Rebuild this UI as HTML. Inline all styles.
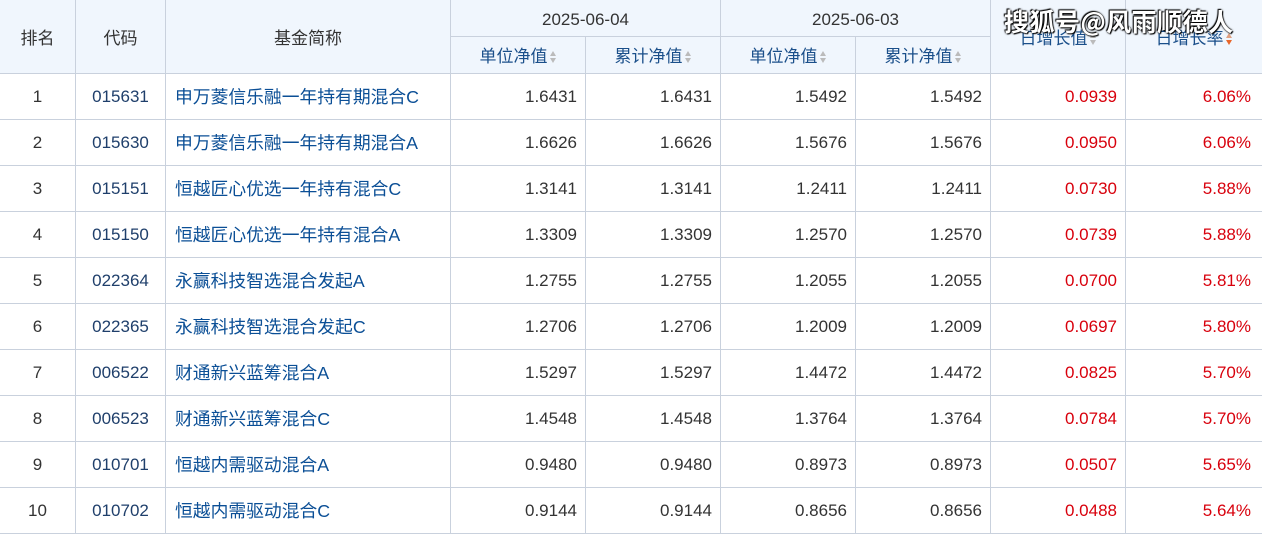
<!DOCTYPE html>
<html><head><meta charset="utf-8"><style>
body{margin:0;width:1262px;height:534px;overflow:hidden;background:#fff;font-family:"Liberation Sans","Noto Sans CJK SC",sans-serif;}
table{border-collapse:collapse;table-layout:fixed;width:1263px;position:absolute;left:-1px;top:-1px;}
td,th{border:1px solid #c9d1dd;font-size:17px;padding:0;white-space:nowrap;overflow:hidden;line-height:20px}
td>span,th>span{display:inline-block;line-height:20px;height:20px;overflow:visible;position:relative}
th>span{top:2px}
th{background:#f0f6fd;font-weight:normal;color:#333;height:36px}
th.b{color:#1a4f8a}
td{height:45px;color:#333}
td.c{text-align:center}
td.code{text-align:center;color:#1f3f6b}
td.n{text-align:left;padding-left:9px;color:#0b4f96;font-size:17.8px}
td.r{text-align:right;padding-right:8px}
td.red{text-align:right;padding-right:8px;color:#d8000c}
td.red2{text-align:right;padding-right:11px;color:#d8000c}
.s{display:inline-block;width:8px;height:14px;vertical-align:-2px;margin-left:1px}
.wm{position:absolute;left:1004px;top:6px;font-size:25px;line-height:30px;letter-spacing:0.5px;color:#fff;font-weight:bold;text-shadow:0 0 2px #000,1px 1px 1px #000,-1px -1px 1px #000;font-family:"Noto Sans CJK SC",sans-serif}
</style></head><body>
<table>
<colgroup><col style="width:76px"><col style="width:90px"><col style="width:285px"><col style="width:135px"><col style="width:135px"><col style="width:135px"><col style="width:135px"><col style="width:135px"><col style="width:137px"></colgroup>
<tr><th rowspan="2"><span>排名</span></th><th rowspan="2"><span>代码</span></th><th rowspan="2"><span>基金简称</span></th><th colspan="2"><span>2025-06-04</span></th><th colspan="2"><span>2025-06-03</span></th><th rowspan="2" class="b"><span>日增长值<svg class="s" viewBox="0 0 8 14"><path d="M4 1L7 6H1Z M4 13L7 8H1Z" fill="#bbb"/></svg></span></th><th rowspan="2" class="b"><span>日增长率<svg class="s" viewBox="0 0 8 14"><path d="M4 1L7 6H1Z" fill="#e0a080"/><path d="M4 13L7 8H1Z" fill="#e8662a"/></svg></span></th></tr>
<tr>
<th class="b"><span>单位净值<svg class="s" viewBox="0 0 8 14"><path d="M4 1L7 6H1Z M4 13L7 8H1Z" fill="#bbb"/></svg></span></th>
<th class="b"><span>累计净值<svg class="s" viewBox="0 0 8 14"><path d="M4 1L7 6H1Z M4 13L7 8H1Z" fill="#bbb"/></svg></span></th>
<th class="b"><span>单位净值<svg class="s" viewBox="0 0 8 14"><path d="M4 1L7 6H1Z M4 13L7 8H1Z" fill="#bbb"/></svg></span></th>
<th class="b"><span>累计净值<svg class="s" viewBox="0 0 8 14"><path d="M4 1L7 6H1Z M4 13L7 8H1Z" fill="#bbb"/></svg></span></th>
</tr>
<tr><td class="c"><span>1</span></td><td class="code"><span>015631</span></td><td class="n"><span>申万菱信乐融一年持有期混合C</span></td><td class="r"><span>1.6431</span></td><td class="r"><span>1.6431</span></td><td class="r"><span>1.5492</span></td><td class="r"><span>1.5492</span></td><td class="red"><span>0.0939</span></td><td class="red2"><span>6.06%</span></td></tr>
<tr><td class="c"><span>2</span></td><td class="code"><span>015630</span></td><td class="n"><span>申万菱信乐融一年持有期混合A</span></td><td class="r"><span>1.6626</span></td><td class="r"><span>1.6626</span></td><td class="r"><span>1.5676</span></td><td class="r"><span>1.5676</span></td><td class="red"><span>0.0950</span></td><td class="red2"><span>6.06%</span></td></tr>
<tr><td class="c"><span>3</span></td><td class="code"><span>015151</span></td><td class="n"><span>恒越匠心优选一年持有混合C</span></td><td class="r"><span>1.3141</span></td><td class="r"><span>1.3141</span></td><td class="r"><span>1.2411</span></td><td class="r"><span>1.2411</span></td><td class="red"><span>0.0730</span></td><td class="red2"><span>5.88%</span></td></tr>
<tr><td class="c"><span>4</span></td><td class="code"><span>015150</span></td><td class="n"><span>恒越匠心优选一年持有混合A</span></td><td class="r"><span>1.3309</span></td><td class="r"><span>1.3309</span></td><td class="r"><span>1.2570</span></td><td class="r"><span>1.2570</span></td><td class="red"><span>0.0739</span></td><td class="red2"><span>5.88%</span></td></tr>
<tr><td class="c"><span>5</span></td><td class="code"><span>022364</span></td><td class="n"><span>永赢科技智选混合发起A</span></td><td class="r"><span>1.2755</span></td><td class="r"><span>1.2755</span></td><td class="r"><span>1.2055</span></td><td class="r"><span>1.2055</span></td><td class="red"><span>0.0700</span></td><td class="red2"><span>5.81%</span></td></tr>
<tr><td class="c"><span>6</span></td><td class="code"><span>022365</span></td><td class="n"><span>永赢科技智选混合发起C</span></td><td class="r"><span>1.2706</span></td><td class="r"><span>1.2706</span></td><td class="r"><span>1.2009</span></td><td class="r"><span>1.2009</span></td><td class="red"><span>0.0697</span></td><td class="red2"><span>5.80%</span></td></tr>
<tr><td class="c"><span>7</span></td><td class="code"><span>006522</span></td><td class="n"><span>财通新兴蓝筹混合A</span></td><td class="r"><span>1.5297</span></td><td class="r"><span>1.5297</span></td><td class="r"><span>1.4472</span></td><td class="r"><span>1.4472</span></td><td class="red"><span>0.0825</span></td><td class="red2"><span>5.70%</span></td></tr>
<tr><td class="c"><span>8</span></td><td class="code"><span>006523</span></td><td class="n"><span>财通新兴蓝筹混合C</span></td><td class="r"><span>1.4548</span></td><td class="r"><span>1.4548</span></td><td class="r"><span>1.3764</span></td><td class="r"><span>1.3764</span></td><td class="red"><span>0.0784</span></td><td class="red2"><span>5.70%</span></td></tr>
<tr><td class="c"><span>9</span></td><td class="code"><span>010701</span></td><td class="n"><span>恒越内需驱动混合A</span></td><td class="r"><span>0.9480</span></td><td class="r"><span>0.9480</span></td><td class="r"><span>0.8973</span></td><td class="r"><span>0.8973</span></td><td class="red"><span>0.0507</span></td><td class="red2"><span>5.65%</span></td></tr>
<tr><td class="c"><span>10</span></td><td class="code"><span>010702</span></td><td class="n"><span>恒越内需驱动混合C</span></td><td class="r"><span>0.9144</span></td><td class="r"><span>0.9144</span></td><td class="r"><span>0.8656</span></td><td class="r"><span>0.8656</span></td><td class="red"><span>0.0488</span></td><td class="red2"><span>5.64%</span></td></tr>
</table>
<div class="wm">搜狐号@风雨顺德人</div>
</body></html>
